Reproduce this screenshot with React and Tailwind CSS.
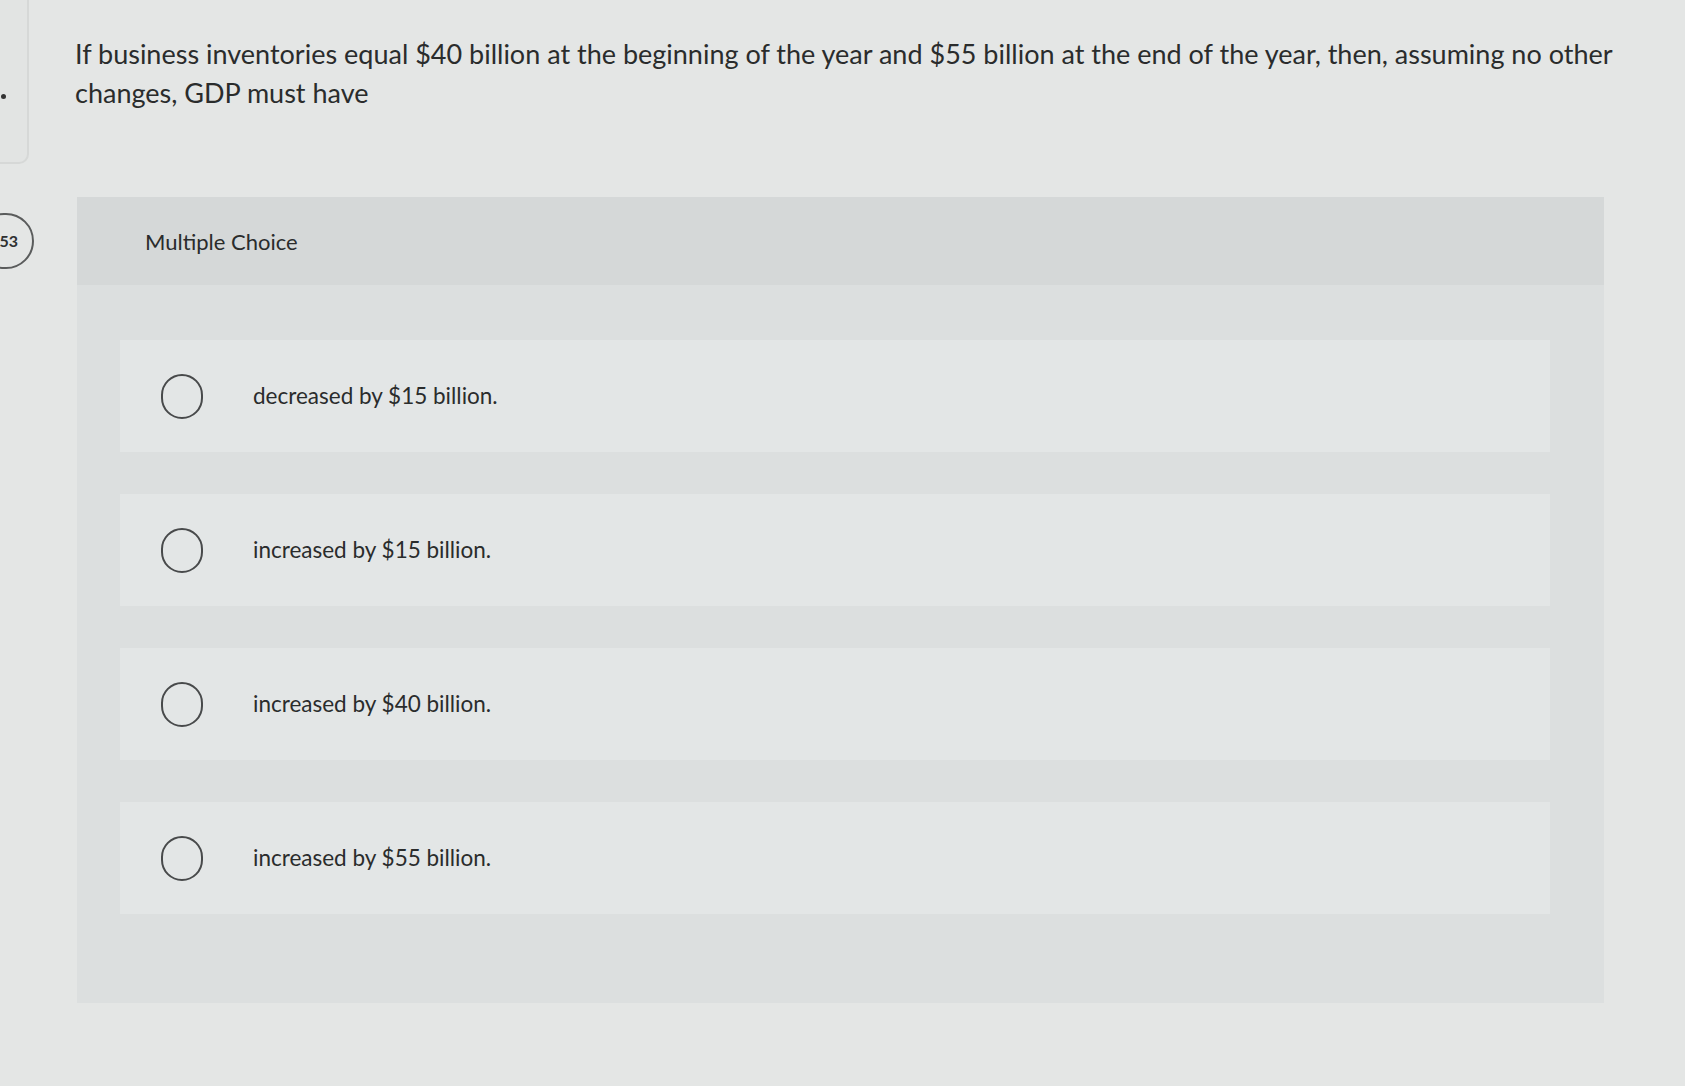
import React from 'react';

const options = [
  'decreased by $15 billion.',
  'increased by $15 billion.',
  'increased by $40 billion.',
  'increased by $55 billion.',
];

const Radio = () => (
  <div className="w-[42px] h-[45px] shrink-0 rounded-full border-2 border-[#484a4b]" />
);

export default function App() {
  return (
    <div
      className="w-full h-[1086px] overflow-hidden flex bg-[#e4e6e5] text-[#2a2c2c]"
      style={{ fontFamily: 'Lato, "Open Sans", "Liberation Sans", sans-serif' }}
    >
      {/* left rail, cut off by the window edge */}
      <div className="w-[75px] shrink-0 flex flex-col">
        <div className="relative w-[29px] h-[170px] -mt-[6px] rounded-br-[10px] border-r-2 border-b-2 border-[#d6d8d7] bg-[#e2e4e3]">
          <div className="absolute left-[1px] top-[100px] w-[5px] h-[5px] rounded-full bg-[#333]" />
        </div>
        <div className="mt-[49px] -ml-[24px] w-[58px] h-[56px] rounded-full border-2 border-[#5a5c5c] flex items-center justify-end pr-[14px]">
          <span className="text-[16px] font-bold text-[#2f3131]">53</span>
        </div>
      </div>

      <div className="flex-1 flex flex-col pt-[34px]">
        <p className="text-[27px] leading-[39px] w-[1580px] whitespace-nowrap">
          If business inventories equal $40 billion at the beginning of the year and $55 billion at the end of the year, then, assuming no other
          <br />
          changes, GDP must have
        </p>

        <div className="mt-[85px] ml-[2px] w-[1527px] bg-[#dcdfdf]">
          <div className="h-[88px] pl-[68px] flex items-center bg-[#d5d8d8]">
            <span className="text-[22px]">Multiple Choice</span>
          </div>
          <div className="pt-[55px] pb-[89px] pl-[43px] pr-[54px] flex flex-col gap-[42px]">
            {options.map((o) => (
              <div key={o} className="h-[112px] pl-[41px] flex items-center gap-[50px] bg-[#e3e6e6]">
                <Radio />
                <span className="text-[22.5px]">{o}</span>
              </div>
            ))}
          </div>
        </div>
      </div>
    </div>
  );
}
